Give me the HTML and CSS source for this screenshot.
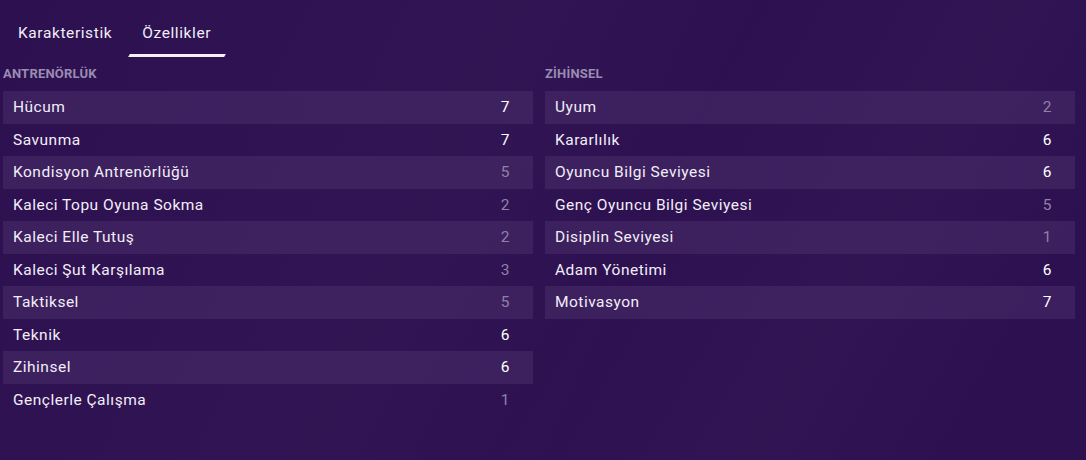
FILE: index.html
```html
<!DOCTYPE html>
<html lang="tr">
<head>
<meta charset="utf-8">
<link rel="stylesheet" href="styles.css">
</head>
<body>
<div class="page">
  <nav class="tabs">
    <div class="tab">Karakteristik</div>
    <div class="tab active">Özellikler</div>
  </nav>
  <div class="columns">
    <section class="col">
      <h2 class="head">ANTRENÖRLÜK</h2>
      <div class="row"><span>Hücum</span><span class="val">7</span></div>
      <div class="row"><span>Savunma</span><span class="val">7</span></div>
      <div class="row"><span>Kondisyon Antrenörlüğü</span><span class="val dim">5</span></div>
      <div class="row"><span>Kaleci Topu Oyuna Sokma</span><span class="val dim">2</span></div>
      <div class="row"><span>Kaleci Elle Tutuş</span><span class="val dim">2</span></div>
      <div class="row"><span>Kaleci Şut Karşılama</span><span class="val dim">3</span></div>
      <div class="row"><span>Taktiksel</span><span class="val dim">5</span></div>
      <div class="row"><span>Teknik</span><span class="val">6</span></div>
      <div class="row"><span>Zihinsel</span><span class="val">6</span></div>
      <div class="row"><span>Gençlerle Çalışma</span><span class="val dim">1</span></div>
    </section>
    <section class="col">
      <h2 class="head">ZİHİNSEL</h2>
      <div class="row"><span>Uyum</span><span class="val dim">2</span></div>
      <div class="row"><span>Kararlılık</span><span class="val">6</span></div>
      <div class="row"><span>Oyuncu Bilgi Seviyesi</span><span class="val">6</span></div>
      <div class="row"><span>Genç Oyuncu Bilgi Seviyesi</span><span class="val dim">5</span></div>
      <div class="row"><span>Disiplin Seviyesi</span><span class="val dim">1</span></div>
      <div class="row"><span>Adam Yönetimi</span><span class="val">6</span></div>
      <div class="row"><span>Motivasyon</span><span class="val">7</span></div>
    </section>
  </div>
</div>
</body>
</html>
```
FILE: styles.css
```css
html, body {
  margin: 0;
  padding: 0;
  height: 100%;
}
body {
  background: #2d1050;
  background-image:
    linear-gradient(115deg, rgba(255,255,255,0) 0%, rgba(255,255,255,0.02) 40%, rgba(255,255,255,0) 60%),
    linear-gradient(120deg, rgba(255,255,255,0) 55%, rgba(255,255,255,0.02) 75%, rgba(255,255,255,0) 90%);
  font-family: Roboto, "Liberation Sans", sans-serif;
  color: #f2eef8;
}
.page {
  padding: 0 11px 0 3px;
}
.tabs {
  display: flex;
  height: 58px;
  align-items: flex-start;
}
.tab {
  font-size: 15.5px;
  letter-spacing: 0.6px;
  padding: 24px 15px 0;
  height: 58px;
  box-sizing: border-box;
  position: relative;
  color: #f2eef8;
}
.tab.active {
  padding: 24px 14px 0;
  margin-left: 1px;
}
.tab.active::after {
  content: "";
  position: absolute;
  left: 1px;
  right: 0;
  top: 54px;
  height: 3px;
  background: #f4f0f6;
  transform: skewX(-30deg);
}
.columns {
  display: grid;
  grid-template-columns: 530px 530px;
  gap: 12px;
}
.head {
  margin: 0;
  font-size: 13px;
  letter-spacing: 0.2px;
  font-weight: bold;
  color: #9a8cb2;
  height: 26px;
  line-height: 18px;
  padding-top: 7px;
}
.row {
  display: flex;
  justify-content: space-between;
  align-items: center;
  height: 32.5px;
  padding: 0 23px 0 10px;
  font-size: 15.5px;
  letter-spacing: 0.5px;
}
.row:nth-of-type(odd) {
  background: rgba(80, 50, 110, 0.45);
}
.val {
  color: #ffffff;
}
.val.dim {
  color: #8f82a8;
}
```
